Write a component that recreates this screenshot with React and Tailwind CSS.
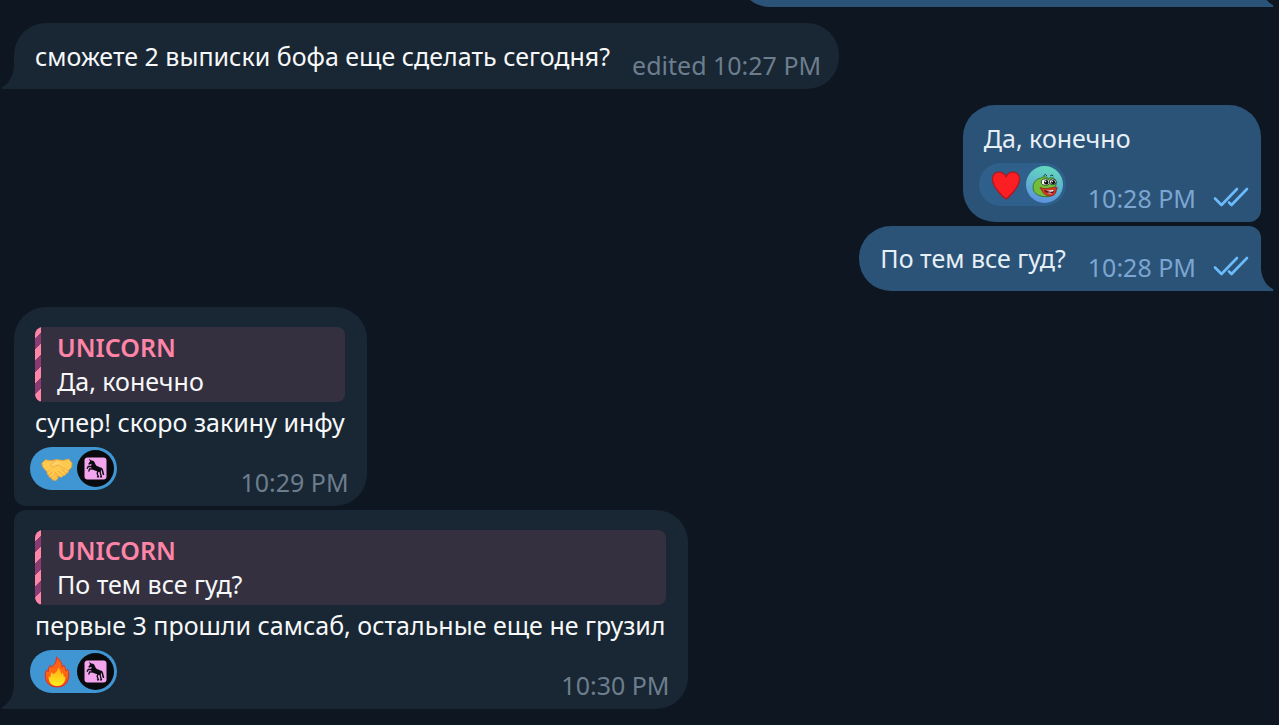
import clsx from "clsx";

function Heart() {
  return (
    <svg viewBox="0 0 32 32" className="h-8 w-8" aria-hidden="true">
      <path
        d="M16 30C13 28 3 18.500 2.500 10.500C2.300 6 5 3.200 8.800 3.200C12 3.200 14.500 4.800 16 7.600C17.500 4.800 20 3.200 23.200 3.200C27 3.200 29.700 6 29.500 10.500C29 18.500 19 28 16 30Z"
        fill="#fb1f24"
        stroke="#b5161c"
        strokeWidth="1.300"
      />
    </svg>
  );
}

function Handshake() {
  return (
    <svg viewBox="0 0 32 32" className="h-8 w-8" aria-hidden="true">
      <g stroke="#f0a035" strokeWidth="0.800" strokeLinejoin="round" strokeLinecap="round">
        <path
          d="M1 10L4.500 6.800L10 7.800L15.500 6.500L22 7.600L27.500 6L31 10L30.600 14L27.500 17.500C27.800 19 26.800 20.300 25.300 20.300C25 21.800 23.800 22.800 22.300 22.400C21.600 23.800 20 24.600 18.700 23.800L16.800 22.800C17.600 25.500 15.600 28.200 13 27.300C11.700 27.300 10.300 26.300 10.300 24.800C8.700 24.900 7.600 23.700 7.900 22.300C6.300 21.900 5.600 20.300 6.300 19L3.800 16.500L1.500 13.500Z"
          fill="#fdc94e"
        />
        <path
          d="M15.500 7L9.800 11.500C9.500 14 12.500 14.800 14.500 12.800L17.500 11.800L27 17.800"
          fill="#ffd467"
        />
        <path d="M20.500 16.500L25 20M17.500 18.500L22 22M14.500 19.500L17 23" fill="none" />
        <path
          d="M6.500 19L9 16.800M8 22.300L12 18.500M10.400 24.800L14.500 20.500M13 26.700L16 23.200"
          fill="none"
        />
      </g>
    </svg>
  );
}

function Fire() {
  return (
    <svg viewBox="0 0 32 32" className="h-8 w-8" aria-hidden="true">
      <defs>
        <linearGradient id="flame" x1="0" y1="0" x2="0" y2="1">
          <stop offset="0" stopColor="#ff5a16" />
          <stop offset="0.500" stopColor="#ff6a13" />
          <stop offset="1" stopColor="#f93a1a" />
        </linearGradient>
        <linearGradient id="flameCore" x1="0" y1="0" x2="0" y2="1">
          <stop offset="0" stopColor="#ffac16" />
          <stop offset="1" stopColor="#fff01f" />
        </linearGradient>
      </defs>
      <path
        d="M15.500 1C18.500 3.200 21.500 7 21 11.500C22 11 22.500 9.800 22.800 9C24 10.500 24.200 12.500 25 15C26 14.600 26.500 14 26.800 13.300C28 16 28 20.500 27.200 23.500C25.800 28.300 22 31 16.300 31C10.500 31 6 28.300 4.800 23.500C3.900 20 4.200 16.500 5.500 13.800C6 15 6.600 15.500 7.300 15.800C7.300 13 8 10.500 9.300 9.200C9.500 10.300 10 10.800 10.600 11C13.500 9 15.800 5.500 15.500 1Z"
        fill="url(#flame)"
        stroke="#e22b1d"
        strokeWidth="0.900"
      />
      <path
        d="M17 11.500C19.500 13.500 20 16 20 18.500C20.800 18 21.300 17 21.500 16C22.500 17.500 22.500 19.500 23 21C23.500 20.800 24 20.400 24.300 20C25 25.500 22 30 16 30C10.500 30 7 26 7.800 20C8.300 20.700 8.800 21 9.500 21.200C9.300 19 9.700 17.300 10.700 16C11 17.200 11.500 17.800 12.300 18C15 17 17 14.500 17 11.500Z"
        fill="url(#flameCore)"
      />
    </svg>
  );
}

function FrogAvatar() {
  return (
    <svg viewBox="0 0 38 38" className="h-[37px] w-[37px]" aria-hidden="true">
      <defs>
        <linearGradient id="frogBg" x1="0.600" y1="0" x2="0.400" y2="1">
          <stop offset="0" stopColor="#63d9bd" />
          <stop offset="1" stopColor="#5c91df" />
        </linearGradient>
      </defs>
      <circle cx="19" cy="19" r="19" fill="url(#frogBg)" />
      <path d="M18 10Q20 7.500 21.500 10M25 10Q27 8 28 10.500" fill="none" stroke="#1c2d2b" strokeWidth="1" />
      <path
        d="M15 12.500C17 10.500 21 10.500 23 12.800C25 11.300 29 11.800 30 14.500C31.500 16 31.500 19 30 21L31.500 23.500C31 28 26 32 19 31.500C12 31 7.500 27.500 7.300 22.500C7 18 9.500 13.500 15 12.500Z"
        fill="#72be3b"
        stroke="#2f6322"
        strokeWidth="0.800"
      />
      <ellipse cx="20" cy="16.500" rx="4.300" ry="3.200" fill="#fff" stroke="#193320" strokeWidth="0.900" />
      <ellipse cx="27.600" cy="16.300" rx="3.400" ry="3" fill="#fff" stroke="#193320" strokeWidth="0.900" />
      <circle cx="20.800" cy="16.800" r="2.300" fill="#111" />
      <circle cx="27.800" cy="16.600" r="2.100" fill="#111" />
      <circle cx="20" cy="15.900" r="0.800" fill="#fff" />
      <circle cx="27" cy="15.900" r="0.700" fill="#fff" />
      <path
        d="M15 22C19 24.800 25 21.800 31.500 21.800C33 22.500 31.800 24 30.800 24.300C31 28 29 30.500 25.500 30.800C20.500 31 16.800 28 16.300 24.500C14.800 24 14 22.500 15 22Z"
        fill="#d93a20"
        stroke="#7e1c14"
        strokeWidth="0.700"
      />
      <path d="M18.500 25Q24 25.500 29 24.200Q29 28.500 25.500 28.500Q20.500 28.500 18.500 25Z" fill="#5d1019" />
      <path d="M20.500 25.200Q25 25.500 28.500 24.500L28 26Q24 27 20.500 25.200Z" fill="#fff" />
      <path d="M21.500 27.500Q24 26.500 27 28Q24.500 29.500 21.500 27.500Z" fill="#ef9aa7" />
    </svg>
  );
}

function UnicornAvatar() {
  return (
    <svg viewBox="0 0 37 37" className="h-[37px] w-[37px]" aria-hidden="true">
      <circle cx="18.500" cy="18.500" r="18.500" fill="#090b0e" />
      <rect x="7.500" y="7.500" width="22" height="22" rx="3" fill="#f3a5ee" />
      <g transform="translate(7.500 7.500)">
        {/* horn, head, mane and body */}
        <path
          d="M4.600 1L6.600 3C8.500 2.500 10 3.800 10.400 5.600C10.900 7.200 11.600 8.200 13 8.800C15 9.200 16.600 10.300 16.600 12.200C16.600 13.800 15.300 14.900 13.900 14.600C12.300 13.400 10 13.300 8.200 12C6.900 11 6.300 9.800 6.800 8L7 6.300L4.600 7.300L3.700 6.500L5.500 4Z"
          fill="#0b0b10"
        />
        <g fill="none" stroke="#0b0b10" strokeLinejoin="round" strokeLinecap="round">
          {/* front legs */}
          <path d="M7.500 9L3.800 8.800L2.800 10.800M8.200 11.400L5 11.500L4.400 13.600" strokeWidth="1.300" />
          {/* hind legs */}
          <path d="M13.500 13.500L12.600 16L14 19.300H12.900M15.500 13.500L16 16.200L17 19.400H16" strokeWidth="1.300" />
          {/* tail */}
          <path d="M16 10.800C18.800 11 17.600 14.500 19 16.800" strokeWidth="1.500" />
        </g>
      </g>
    </svg>
  );
}

function Checks() {
  return (
    <svg
      viewBox="0 0 36 20"
      className="mb-2 h-5 w-9 shrink-0"
      fill="none"
      stroke="#6cbcfb"
      strokeWidth="2.600"
      strokeLinecap="round"
      strokeLinejoin="round"
      role="img"
      aria-label="Read"
    >
      <path d="M2 11.500L8.500 18L24 2" />
      <path d="M16 15.500L18.500 18L34 2" />
    </svg>
  );
}

function Tail({ out }) {
  return (
    <svg
      viewBox="0 0 14 26"
      aria-hidden="true"
      className={clsx(
        "absolute bottom-0 h-[26px] w-[14px]",
        out ? "-right-[13px] -scale-x-100 text-[#2b5378]" : "-left-[13px] text-[#192633]"
      )}
    >
      <path d="M14 0H13.200C13.200 11 9 20 1.500 23.800Q-0.500 25.500 1.500 26H14Z" fill="currentColor" />
    </svg>
  );
}

function Bubble({ out, tail, className, children }) {
  return (
    <article
      className={clsx(
        "relative max-w-full pb-[7px] pl-[21px]",
        out ? "self-end bg-[#2b5378] text-[#e7eff6]" : "self-start bg-[#192633] text-[#f6f8f9]",
        className
      )}
    >
      {children}
      {tail && <Tail out={out} />}
    </article>
  );
}

function Meta({ out, edited, time }) {
  return (
    <div
      className={clsx(
        "flex items-end gap-[17px] whitespace-nowrap",
        out ? "text-[#7ba6d2]" : "text-[#6c7e8e]"
      )}
    >
      <span>
        {edited && "edited "}
        <time>{time}</time>
      </span>
      {out && <Checks />}
    </div>
  );
}

function Reaction({ out, label, emoji, avatar }) {
  return (
    <button
      type="button"
      aria-label={label}
      className={clsx(
        "mb-[9px] -ml-[5px] flex h-[43px] items-center gap-1 rounded-full pr-[3px] pl-[11px]",
        out ? "bg-[#2f608b]" : "bg-[#4096d2]"
      )}
    >
      {emoji}
      {avatar}
    </button>
  );
}

function Reply({ name, text }) {
  return (
    <blockquote className="flex overflow-hidden rounded-lg bg-[#353040]">
      <span className="w-[6px] shrink-0 bg-[repeating-linear-gradient(135deg,#ff85a8_0px,#ff85a8_8px,#8d3a72_8px,#8d3a72_16px)]" />
      <div className="px-4 pt-[3px] pb-1">
        <p className="font-semibold text-[#ff85a8]">{name}</p>
        <p>{text}</p>
      </div>
    </blockquote>
  );
}

export default function App() {
  return (
    <main className="flex h-screen flex-col justify-end overflow-hidden bg-[#0e1621] pr-[18px] pb-4 pl-[14px] font-['Noto_Sans',sans-serif] text-[25px] leading-[34px]">
      {/* tail end of the previous message, scrolled out at the top */}
      <Bubble out tail className="mb-4 h-[66px] w-[523px] shrink-0 rounded-[32px] rounded-br-none" />

      <Bubble tail className="mb-4 flex items-end gap-[22px] rounded-[32px] rounded-bl-none pt-4 pr-[18px]">
        <p className="mb-[9px]">сможете 2 выписки бофа еще сделать сегодня?</p>
        <Meta edited time="10:27 PM" />
      </Bubble>

      <Bubble out className="mb-1 rounded-[32px] rounded-br-xl pt-4 pr-3">
        <p>Да, конечно</p>
        <div className="mt-2 flex items-end justify-between gap-[22px]">
          <Reaction out label="Heart" emoji={<Heart />} avatar={<FrogAvatar />} />
          <Meta out time="10:28 PM" />
        </div>
      </Bubble>

      <Bubble out tail className="mb-4 flex items-end gap-[22px] rounded-[32px] rounded-tr-xl rounded-br-none pt-[15px] pr-3">
        <p className="mb-[9px]">По тем все гуд?</p>
        <Meta out time="10:28 PM" />
      </Bubble>

      <Bubble className="mb-1 rounded-[32px] rounded-bl-xl pt-5 pr-[22px]">
        <Reply name="UNICORN" text="Да, конечно" />
        <p className="mt-[3px]">супер! скоро закину инфу</p>
        <div className="mt-2 -mr-1 flex items-end justify-between">
          <Reaction label="Handshake" emoji={<Handshake />} avatar={<UnicornAvatar />} />
          <Meta time="10:29 PM" />
        </div>
      </Bubble>

      <Bubble tail className="rounded-[32px] rounded-tl-xl rounded-bl-none pt-5 pr-[22px]">
        <Reply name="UNICORN" text="По тем все гуд?" />
        <p className="mt-[3px]">первые 3 прошли самсаб, остальные еще не грузил</p>
        <div className="mt-2 -mr-1 flex items-end justify-between">
          <Reaction label="Fire" emoji={<Fire />} avatar={<UnicornAvatar />} />
          <Meta time="10:30 PM" />
        </div>
      </Bubble>
    </main>
  );
}
